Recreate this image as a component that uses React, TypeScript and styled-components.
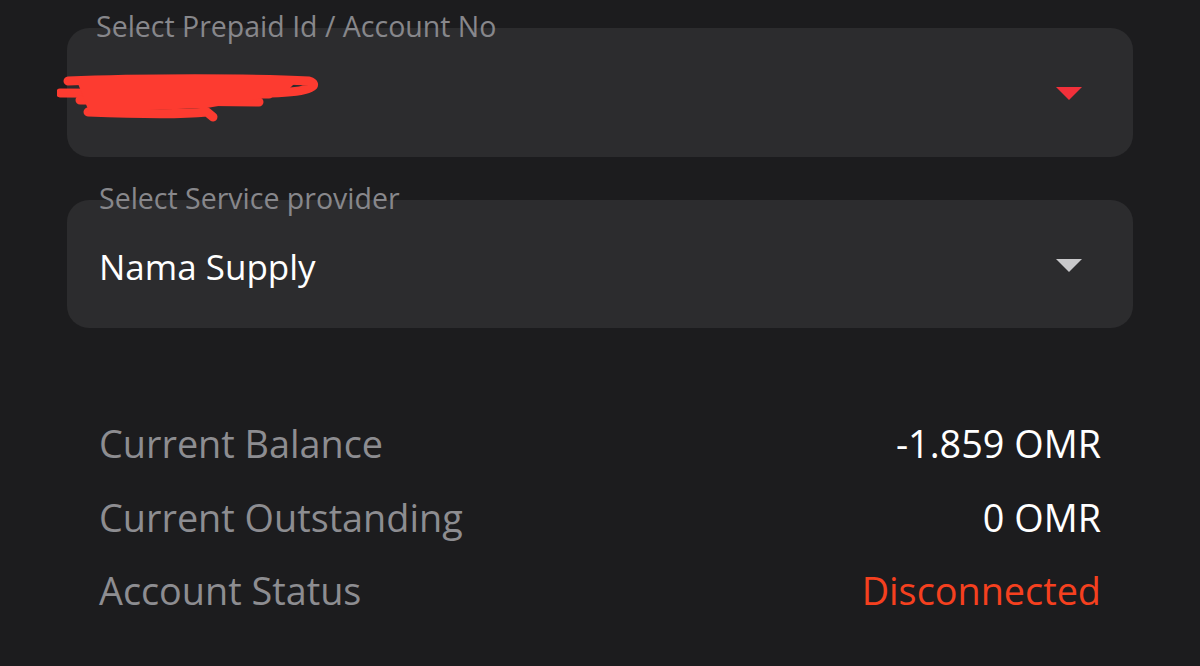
import React from 'react'
import styled, { createGlobalStyle } from 'styled-components';

const GlobalStyle = createGlobalStyle`
html, body {
  margin: 0;
  padding: 0;
  background: #1c1c1e;
}
body {
  font-family: "Open Sans", "Noto Sans", sans-serif;
}
`;

const Page = styled.main`
width: 1200px;
height: 666px;
box-sizing: border-box;
padding: 28px 67px 0 67px;
display: flex;
flex-direction: column;
overflow: hidden;
`;

const Field = styled.div<{ $gap: number }>`
position: relative;
margin-bottom: ${p => p.$gap}px;
`;

const SelectBox = styled.div<{ $height: number }>`
height: ${p => p.$height}px;
box-sizing: border-box;
background: #2c2c2e;
border-radius: 22px;
display: flex;
align-items: center;
justify-content: space-between;
padding: 0 51px 0 32px;
`;

const FloatLabel = styled.span<{ $top: number; $left: number }>`
position: absolute;
top: ${p => p.$top}px;
left: ${p => p.$left}px;
font-size: 28.5px;
line-height: 28.5px;
color: #87878b;
white-space: nowrap;
`;

const Value = styled.span`
font-size: 35px;
color: #ffffff;
margin-top: 4px;
`;

const Caret = styled.span<{ $color: string }>`
width: 0;
height: 0;
border-left: 13px solid transparent;
border-right: 13px solid transparent;
border-top: 13px solid ${p => p.$color};
margin-top: 2px;
`;

const Scribble = styled.svg`
position: absolute;
left: -10px;
top: 44px;
`;

const Summary = styled.div`
display: flex;
flex-direction: column;
padding: 0 32px;
`;

const Row = styled.div`
height: 73.5px;
display: flex;
align-items: center;
justify-content: space-between;
font-size: 37.8px;
`;

const RowLabel = styled.span`
color: #8d8d91;
`;

const RowValue = styled.span<{ $alert?: boolean }>`
color: ${p => (p.$alert ? '#f5401f' : '#ffffff')};
`;

const rows = [
  { label: 'Current Balance', value: '-1.859 OMR' },
  { label: 'Current Outstanding', value: '0 OMR' },
  { label: 'Account Status', value: 'Disconnected', alert: true },
];

export default function App() {
  return (
    <>
      <GlobalStyle />
      <Page>
        <Field $gap={43}>
          <SelectBox $height={129}>
            <Value />
            <Caret $color="#f2303a" />
          </SelectBox>
          <FloatLabel $top={-16} $left={29}>Select Prepaid Id / Account No</FloatLabel>
          <Scribble width="270" height="52" viewBox="0 0 270 52">
            <g fill="none" stroke="#fd3b30" strokeWidth="9" strokeLinecap="round" strokeLinejoin="round">
              <path d="M11 9 C 80 6, 200 6, 252 9 C 262 12, 258 20, 214 21" />
              <path d="M3 21 L 212 22" />
              <path d="M23 28 L 202 30" />
              <path d="M31 40 C 80 42, 130 42, 150 40 L 156 45" />
            </g>
            <path d="M20 9 L 240 9 L 230 19 L 200 27 L 150 36 L 32 40 Z" fill="#fd3b30" />
          </Scribble>
        </Field>
        <Field $gap={79}>
          <SelectBox $height={128}>
            <Value>Nama Supply</Value>
            <Caret $color="#c9c9cb" />
          </SelectBox>
          <FloatLabel $top={-16} $left={32}>Select Service provider</FloatLabel>
        </Field>
        <Summary>
          {rows.map(r => (
            <Row key={r.label}>
              <RowLabel>{r.label}</RowLabel>
              <RowValue $alert={r.alert}>{r.value}</RowValue>
            </Row>
          ))}
        </Summary>
      </Page>
    </>
  )
}
